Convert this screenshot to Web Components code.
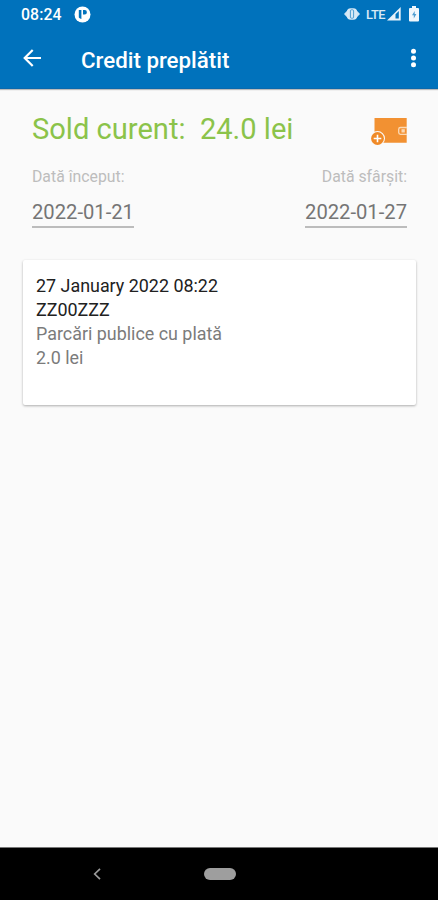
<!DOCTYPE html>
<html lang="ro">
<head>
<meta charset="UTF-8">
<meta name="viewport" content="width=device-width, initial-scale=1.0">
<title>Credit preplătit</title>
<style>
  body {
    margin: 0;
    font-family: Roboto, "Noto Sans", sans-serif;
    background: #fafafa;
  }
</style>
</head>
<body>
<credit-screen></credit-screen>

<script>
class StatusBar extends HTMLElement {
  constructor() {
    super();
    this.attachShadow({ mode: "open" });
  }

  connectedCallback() {
    this.shadowRoot.innerHTML = `
      <style>
        :host {
          display: flex;
          align-items: center;
          box-sizing: border-box;
          height: 28px;
          padding: 0 19px 0 21px;
          background: #0072bc;
          color: #fff;
        }
        svg { display: block; flex: none; }
        .time { font-size: 15.8px; font-weight: 500; letter-spacing: 0.1px; width: 53px; margin-top: 1px; }
        .right { display: flex; align-items: center; margin-left: auto; }
        .lte { font-size: 12.8px; font-weight: 500; letter-spacing: -0.5px; margin: 0 2px 0 6px; opacity: 0.85; }
        .battery { margin-left: 8px; }
      </style>
      <span class="time"><slot></slot></span>
      <svg width="17" height="17" viewBox="0 0 17 17">
        <circle cx="8.5" cy="8.5" r="8" fill="#fff"/>
        <path d="M4.800 4h2.600v9a6 6 0 0 1-2.600-1.500zM9 4h1.700a2.200 2.200 0 0 1 0 4.400H9z" fill="#0072bc"/>
      </svg>
      <div class="right">
        <svg width="16" height="14" viewBox="0 0 16 14">
          <path d="M0 7 3.800 3v8zM16 7l-3.800-4v8z" fill="#cfe4f4"/>
          <rect x="2.800" y="1.300" width="10.400" height="11.400" rx="4" fill="#d8e9f6"/>
          <rect x="6.400" y="2.800" width="3.200" height="8.400" rx="1" fill="none" stroke="#4d9cd0"/>
        </svg>
        <span class="lte">LTE</span>
        <svg width="14" height="14" viewBox="0 0 14 14">
          <path d="M0 13.500 13.700 0v13.500z" fill="#e6f1f9"/>
          <path d="M8.500 7.300 11.800 4v7.500H8.500z" fill="#0072bc"/>
        </svg>
        <svg class="battery" width="10" height="16" viewBox="0 0 10 16">
          <path d="M3 0h4v2H9q1 0 1 1v11.500q0 1-1 1H1q-1 0-1-1V3q0-1 1-1h2z" fill="#f0f7fc"/>
          <path d="M5.700 5 3 9.300h1.800V12.500L7.400 8H5.700z" fill="#4d9cd0"/>
        </svg>
      </div>
    `;
  }
}

class AppBar extends HTMLElement {
  constructor() {
    super();
    this.attachShadow({ mode: "open" });
  }

  connectedCallback() {
    this.shadowRoot.innerHTML = `
      <style>
        :host {
          display: flex;
          align-items: center;
          box-sizing: border-box;
          height: 61px;
          padding: 0 21px 0 23px;
          background: #0072bc;
          border-bottom: 1px solid #0a69ad;
          box-shadow: 0 1px 1px rgba(0,0,0,0.25);
          color: #fff;
        }
        svg { display: block; }
        h1 {
          flex: 1;
          margin: 3px 0 0 39px;
          font-size: 22.3px;
          font-weight: 500;
          line-height: 28px;
        }
      </style>
      <svg width="19" height="18" viewBox="0 0 19 18">
        <path d="M18 9H2M9.700 1 1.700 9l8 8" fill="none" stroke="#fff" stroke-width="2.200"/>
      </svg>
      <h1><slot></slot></h1>
      <svg width="7" height="20" viewBox="0 0 7 20" fill="#fff">
        <circle cx="3.500" cy="3.300" r="2.500"/>
        <circle cx="3.500" cy="10" r="2.500"/>
        <circle cx="3.500" cy="16.700" r="2.500"/>
      </svg>
    `;
  }
}

class BalanceRow extends HTMLElement {
  constructor() {
    super();
    this.attachShadow({ mode: "open" });
  }

  connectedCallback() {
    this.shadowRoot.innerHTML = `
      <style>
        :host {
          display: flex;
          justify-content: space-between;
          align-items: center;
          height: 36px;
          color: #8bc34a;
          font-size: 29.1px;
          line-height: 36px;
        }
        .text { white-space: pre; }
        svg { display: block; margin-top: 5px; }
      </style>
      <span class="text"><slot></slot></span>
      <svg width="36" height="28" viewBox="0 0 36 28">
        <path d="M3.500 0H35.700V24.700H3.500z" fill="#f29132"/>
        <path d="M36 9.500h-6.500q-1.800 0-1.800 1.800v3.200q0 1.800 1.800 1.800H36" fill="none" stroke="#fbd9b5" stroke-width="1.300"/>
        <rect x="30.500" y="11.200" width="3.300" height="3.300" fill="#fbd9b5"/>
        <circle cx="6.500" cy="20.500" r="7.500" fill="#fafafa"/>
        <circle cx="6.500" cy="20.500" r="6.400" fill="#f08a27"/>
        <path d="M6.500 16.700v7.600M2.700 20.500h7.600" stroke="#fff" stroke-width="1.600"/>
      </svg>
    `;
  }
}

class DateField extends HTMLElement {
  constructor() {
    super();
    this.attachShadow({ mode: "open" });
  }

  connectedCallback() {
    this.shadowRoot.innerHTML = `
      <style>
        :host { display: flex; flex-direction: column; align-items: flex-start; }
        :host([end]) { align-items: flex-end; }
        .label { font-size: 15.8px; line-height: 20px; color: #bdbdbd; }
        .value {
          margin-top: 12px;
          font-size: 20.2px;
          line-height: 26px;
          height: 27px;
          color: #757575;
          border-bottom: 2px solid #bcbcbc;
        }
      </style>
      <span class="label">${this.getAttribute("label")}</span>
      <span class="value"><slot></slot></span>
    `;
  }
}

class TransactionCard extends HTMLElement {
  constructor() {
    super();
    this.attachShadow({ mode: "open" });
  }

  connectedCallback() {
    this.shadowRoot.innerHTML = `
      <style>
        :host {
          display: block;
          box-sizing: border-box;
          height: 145px;
          padding: 14px 13px;
          background: #fff;
          border-radius: 2px;
          box-shadow: 0 1px 3px rgba(0,0,0,0.2), 0 1px 2px rgba(0,0,0,0.12);
          font-size: 17.9px;
          line-height: 24px;
          color: #7b7b7b;
        }
        .main { color: #212121; }
      </style>
      <div class="main"><slot name="date"></slot></div>
      <div class="main"><slot name="plate"></slot></div>
      <div><slot name="service"></slot></div>
      <div><slot name="price"></slot></div>
    `;
  }
}

class SystemNav extends HTMLElement {
  constructor() {
    super();
    this.attachShadow({ mode: "open" });
  }

  connectedCallback() {
    this.shadowRoot.innerHTML = `
      <style>
        :host {
          display: grid;
          grid-template-columns: 194px 51px 193px;
          align-items: center;
          justify-items: center;
          height: 53px;
          background: #000;
          border-top: 1px solid #777;
          box-sizing: border-box;
        }
        .pill { width: 32px; height: 12px; border-radius: 6px; background: #9e9e9e; }
      </style>
      <svg width="8" height="12" viewBox="0 0 8 12">
        <path d="M7 .8 1.700 6 7 11.200" fill="none" stroke="#999" stroke-width="1.700"/>
      </svg>
      <div class="pill"></div>
    `;
  }
}

class CreditScreen extends HTMLElement {
  constructor() {
    super();
    this.attachShadow({ mode: "open" });
  }

  connectedCallback() {
    this.shadowRoot.innerHTML = `
      <style>
        :host {
          display: flex;
          flex-direction: column;
          width: 438px;
          height: 900px;
          background: #fafafa;
        }
        main { flex: 1; padding: 22px 22px 0 23px; }
        .summary { padding: 0 9px; }
        .dates { display: flex; justify-content: space-between; margin-top: 20px; }
        transaction-card { margin-top: 32px; }
      </style>
      <status-bar>08:24</status-bar>
      <app-bar>Credit preplătit</app-bar>
      <main>
        <div class="summary">
          <balance-row>Sold curent:  24.0 lei</balance-row>
          <div class="dates">
            <date-field label="Dată început:">2022-01-21</date-field>
            <date-field label="Dată sfârșit:" end>2022-01-27</date-field>
          </div>
        </div>
        <transaction-card>
          <span slot="date">27 January 2022 08:22</span>
          <span slot="plate">ZZ00ZZZ</span>
          <span slot="service">Parcări publice cu plată</span>
          <span slot="price">2.0 lei</span>
        </transaction-card>
      </main>
      <system-nav></system-nav>
    `;
  }
}

customElements.define("status-bar", StatusBar);
customElements.define("app-bar", AppBar);
customElements.define("balance-row", BalanceRow);
customElements.define("date-field", DateField);
customElements.define("transaction-card", TransactionCard);
customElements.define("system-nav", SystemNav);
customElements.define("credit-screen", CreditScreen);
</script>
</body>
</html>
